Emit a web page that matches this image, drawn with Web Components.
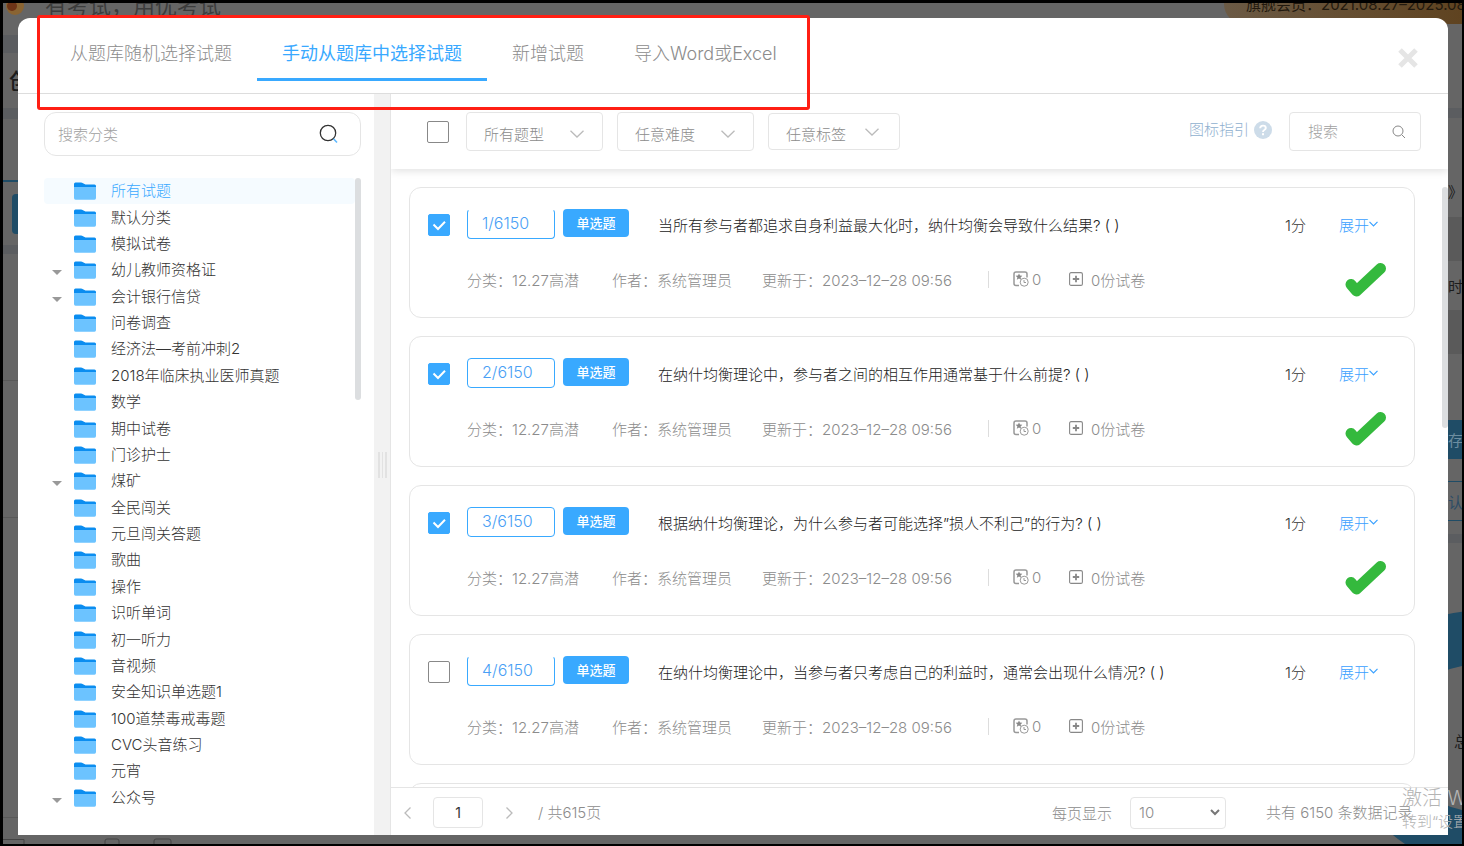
<!DOCTYPE html>
<html lang="zh-CN">
<head>
<meta charset="utf-8">
<title>选择试题</title>
<style>
html, body { height: 100%; margin: 0; }
body { background: #000; font-family: Inter, "Noto Sans CJK SC", sans-serif; font-size: 15px; font-weight: 300; color: #333; overflow: hidden; }
</style>
</head>
<body>
<exam-page></exam-page>
<script>
const define = (name, html, setup) => {
  const tpl = document.createElement('template');
  tpl.innerHTML = `<style>*{box-sizing:border-box}button,input,select{font:inherit;color:inherit;margin:0}:host([hidden]){display:none}</style>` + html;
  customElements.define(name, class extends HTMLElement {
    constructor() {
      super();
      this.attachShadow({ mode: 'open' }).append(tpl.content.cloneNode(true));
    }
    connectedCallback() { if (setup) setup(this, this.shadowRoot); }
  });
};

define('page-backdrop', `
<style>
:host { display: flex; flex-direction: column; position: relative; overflow: hidden; background: #656565; color: #1c1c1c; min-width: 0; min-height: 0; }
.top { display: flex; height: 15px; flex: none; align-items: flex-start; font-size: 22px; line-height: 6px; color: #3c3c3c; white-space: nowrap; font-weight: 400; }
.top svg { margin-left: 2px; margin-right: 20px; flex: none; }
.vip { margin-left: auto; width: 238px; padding-left: 22px; height: 21px; border-radius: 0 0 0 20px; background: linear-gradient(90deg, #6b5a45, #5f4320); font-size: 15px; line-height: 4px; color: #22190e; }
.sides { flex: 1; display: flex; justify-content: space-between; min-height: 0; overflow: hidden; }
.strip { width: 15px; display: flex; flex-direction: column; font-size: 15px; font-weight: 400; }
.strip > div { flex: none; display: flex; align-items: center; overflow: hidden; white-space: nowrap; }
.right { width: 14px; }
.d { background: #5b5d60; }
.b { background: #1f4c66; color: #6d8da0; }
.bottom { height: 9px; flex: none; }
.donut { position: absolute; right: 0; bottom: 0; }
.foot { position: absolute; left: 0; bottom: 0; }
</style>
<div class="top">
  <svg width="20" height="15" viewBox="0 0 20 15"><circle cx="10" cy="3" r="9" fill="#8a6432"/><circle cx="7" cy="3" r="5" fill="#6e3417"/></svg>
  <span>有考试，用优考试</span>
  <div class="vip">旗舰会员：2021.08.27–2025.08</div>
</div>
<div class="sides">
  <div class="strip">
    <div style="height:17px"></div><div class="d" style="height:18px"></div>
    <div style="height:55px;font-size:22px;font-weight:500;padding:0 0 4px 6px">创</div>
    <div class="d" style="height:11px"></div><div style="height:61px"></div>
    <div style="height:2px;background:#1f4c66"></div><div style="height:12px"></div>
    <div class="b" style="height:40px;margin-left:9px;border-radius:4px 0 0 4px"></div>
    <div style="height:11px"></div><div class="d" style="height:9px"></div>
    <div style="height:127px;border-bottom:1px solid #585858"></div>
    <div style="height:137px;border-bottom:1px solid #585858"></div>
    <div style="height:300px;border-bottom:1px solid #585858"></div>
  </div>
  <div class="strip right">
    <div style="height:90px"></div><div class="d" style="height:10px"></div>
    <div style="height:99px;padding-top:47px">》</div>
    <div style="height:44px;background:#5a5a5a"></div>
    <div style="height:49px">时</div>
    <div style="height:44px;background:#5a5a5a"></div>
    <div style="height:66px"></div>
    <div class="b" style="height:39px">存</div>
    <div style="height:22px"></div>
    <div style="height:40px;border-top:1px solid #1f4c66;border-bottom:1px solid #1f4c66;color:#2c4c66">认</div>
    <div style="height:13px"></div><div class="d" style="height:9px"></div>
    <div style="height:180px"></div>
    <div style="height:34px;padding-left:6px">总</div>
  </div>
</div>
<div class="bottom"></div>
<svg class="donut" width="70" height="240" viewBox="1392 604 70 240"><circle cx="1475" cy="738" r="100" fill="none" stroke="#1f4c66" stroke-width="54"/></svg>
<svg class="foot" width="180" height="6" viewBox="0 0 180 6" fill="none" stroke="#444"><path d="M0 1.500H21V6M102 6V3Q102 1 104 1H114Q116 1 116 3V6M151 6V3Q151 1 153 1H166Q168 1 168 3V6"/></svg>
`);

define('tab-item', `
<style>
:host { display: block; }
button { display: block; height: 63px; padding: 12px 25px 0; border: 0; border-bottom: 3px solid transparent; background: none; font-size: 18px; line-height: 24px; color: #8c8c8c; white-space: nowrap; }
:host([active]) button { color: #39a9ff; font-weight: 400; border-bottom-color: #39a9ff; }
</style>
<button type="button" role="tab"><slot></slot></button>`);

define('tree-item', `
<style>
:host { display: flex; align-items: center; padding-left: 8px; border-radius: 4px; min-height: 0; }
:host([active]) { background: #f5fbff; color: #39a9ff; }
.caret { width: 10px; height: 5px; margin-top: 5px; visibility: hidden; }
:host([parent]) .caret { visibility: visible; }
.folder { margin: 0 15px 0 12px; flex: none; }
a { color: inherit; text-decoration: none; line-height: 22px; white-space: nowrap; }
</style>
<svg class="caret" viewBox="0 0 10 5"><path d="M0 0H10L5 5Z" fill="#999"/></svg>
<svg class="folder" width="22" height="18" viewBox="0 0 22 18"><path d="M0 2Q0 .5 1.500 .5H7Q8 .5 9 1.200L11.500 2.500H20.500Q22 2.500 22 4V8H0Z" fill="#0b8df0"/><path d="M0 5H22V16Q22 17.800 20.500 17.800H1.500Q0 17.800 0 16Z" fill="#6cc3ff"/></svg>
<a href="#"><slot></slot></a>`);

define('category-tree', `
<style>
:host { display: flex; flex-direction: column; width: 356px; flex: none; padding: 18px 13px 24px 26px; min-height: 0; }
.search { display: flex; align-items: center; height: 44px; flex: none; border: 1px solid #e5e5e5; border-radius: 12px; padding: 0 21px 0 13px; margin-bottom: 22px; }
input { flex: 1; min-width: 0; border: 0; outline: 0; padding: 0; background: none; }
input::placeholder { color: #a0a0a0; }
.list { position: relative; flex: 1; min-height: 0; display: grid; grid-auto-rows: minmax(0, 1fr); padding-right: 6px; }
.thumb { position: absolute; right: 0; top: 0; width: 6px; height: 35%; border-radius: 3px; background: #dcdee0; }
</style>
<label class="search"><input type="text" placeholder="搜索分类" aria-label="搜索分类">
<svg width="20" height="20" viewBox="0 0 20 20" fill="none"><circle cx="9" cy="9" r="7.700" stroke="#333" stroke-width="1.300"/><path d="M14.500 14.800L18 18.500" stroke="#5cb8ff" stroke-width="1.600"/></svg></label>
<div class="list"><slot></slot><div class="thumb"></div></div>`);

define('filter-select', `
<style>
:host { display: grid; width: 137px; height: 39px; color: #8c8c8c; }
:host([narrow]) { width: 132px; height: 37px; }
select, svg { grid-area: 1 / 1; }
select { appearance: none; width: 100%; height: 100%; border: 1px solid #e5e5e5; border-radius: 4px; background: #fff; padding: 5px 17px 0; outline: 0; }
svg { justify-self: end; align-self: center; margin: 4px 19px 0 0; pointer-events: none; }
:host([narrow]) svg { margin: 0 21px 0 0; }
</style>
<select><option></option></select>
<svg width="14" height="8" viewBox="0 0 14 8" fill="none" stroke="#bbb" stroke-width="1.300"><path d="M.5 .8L7 7L13.500 .8"/></svg>`,
(el, root) => { root.querySelector('option').textContent = el.getAttribute('label'); root.querySelector('select').setAttribute('aria-label', el.getAttribute('label')); });

define('check-box', `
<style>
:host { display: grid; width: 22px; height: 22px; flex: none; }
input, svg { grid-area: 1 / 1; width: 22px; height: 22px; }
input { appearance: none; border: 1px solid #888; border-radius: 2px; background: #fff; }
svg { display: none; pointer-events: none; }
:host([checked]) input { background: #39a9ff; border-color: #39a9ff; }
:host([checked]) svg { display: block; }
</style>
<input type="checkbox" aria-label="选择"><svg viewBox="0 0 22 22" fill="none" stroke="#fff" stroke-width="2"><path d="M5.500 10.500L10 15L17 7.800"/></svg>`,
(el, root) => { root.querySelector('input').checked = el.hasAttribute('checked'); });

define('filter-bar', `
<style>
:host { display: flex; height: 75px; flex: none; padding: 18px 27px 0 36px; box-shadow: 0 2px 8px rgba(0,0,0,.12); clip-path: inset(0 0 -10px 0); position: relative; background: #fff; }
check-box { margin: 9px 17px 0 0; }
filter-select { margin-right: 14px; }
filter-select[narrow] { margin-top: 1px; }
.guide { margin-left: auto; display: flex; align-items: center; height: 36px; gap: 5px; color: #8fb0cf; text-decoration: none; }
.guide span { padding-bottom: 3px; }
.search { display: flex; align-items: center; width: 132px; height: 39px; border: 1px solid #e5e5e5; border-radius: 4px; padding: 0 14px 0 18px; margin-left: 17px; }
input { flex: 1; min-width: 0; border: 0; outline: 0; padding: 0; background: none; }
input::placeholder { color: #a0a0a0; }
</style>
<check-box></check-box>
<filter-select label="所有题型"></filter-select><filter-select label="任意难度"></filter-select><filter-select narrow label="任意标签"></filter-select>
<a class="guide" href="#"><span>图标指引</span><svg width="18" height="18" viewBox="0 0 18 18"><circle cx="9" cy="9" r="9" fill="#cddce9"/><path d="M6.200 7.200Q6.200 4.600 9 4.600T11.800 7Q11.800 8.200 10.300 9Q9 9.700 9 11" fill="none" stroke="#fff" stroke-width="1.900"/><rect x="8" y="12.200" width="2" height="2" fill="#fff"/></svg></a>
<label class="search"><input type="text" placeholder="搜索" aria-label="搜索"><svg width="14" height="14" viewBox="0 0 14 14" fill="none" stroke="#888"><circle cx="6" cy="6" r="5"/><path d="M9.800 9.800L13 13"/></svg></label>`);

define('question-card', `
<style>
:host { display: block; height: 131px; flex: none; border: 1px solid #e5e5e5; border-radius: 12px; padding: 21px 27px 0 18px; }
.row { display: flex; align-items: center; height: 30px; }
:host([pending]) .row { display: none; }
check-box { margin: 2px 17px 0 0; }
.no { width: 88px; height: 30px; border: 1px solid #39a9ff; border-radius: 4px; color: #4a9ff5; font-size: 16px; line-height: 27px; padding-left: 14px; margin-right: 8px; }
:host([open-top]) .no { border-top-color: transparent; }
.tag { width: 66px; height: 28px; border-radius: 4px; background: #39a9ff; color: #fff; font-size: 13px; font-weight: 500; line-height: 28px; text-align: center; margin-right: 29px; align-self: flex-start; }
.title { flex: 1; margin: 0; font-size: 15px; font-weight: 300; white-space: nowrap; color: #222; }
.score { width: 54px; }
.more { width: 48px; display: flex; align-items: center; color: #39a0ff; text-decoration: none; }
.meta { margin: 22px 0 0 39px; height: 36px; color: #8c8c8c; white-space: nowrap; }
.meta > span { flex: none; display: flex; align-items: center; }
.cat { width: 145px; } .author { width: 150px; } .time { width: 226px; }
.sep { width: 1px; height: 17px; background: #ddd; margin-right: 24px; }
.fav { width: 56px; gap: 3px; } .papers { gap: 8px; }
.ok { margin: 2px 0 0 auto; visibility: hidden; }
:host([checked]) .ok { visibility: visible; }
</style>
<div class="row"><check-box></check-box><span class="no"></span><span class="tag">单选题</span><p class="title"><slot></slot></p><span class="score">1分</span>
<a class="more" href="#">展开<svg width="9" height="6" viewBox="0 0 9 6" fill="none" stroke="#39a0ff" stroke-width="1.200"><path d="M.5 .8L4.500 4.800L8.500 .8"/></svg></a></div>
<div class="row meta"><span class="cat">分类：12.27高潜</span><span class="author">作者：系统管理员</span><span class="time">更新于：2023–12–28 09:56</span><span class="sep"></span>
<span class="fav"><svg width="16" height="16" viewBox="0 0 16 16" fill="none" stroke="#999"><path d="M6 14.500H3Q1 14.500 1 12.500V3Q1 1 3 1H12Q14 1 14 3V6.500" stroke-width="1.500"/><path d="M6 2.500L7 4.500L9.300 4.800L7.600 6.400L8.200 8.700L6 7.500L3.800 8.700L4.400 6.400L2.700 4.800L5 4.500Z" fill="#888" stroke="none"/><circle cx="11.200" cy="11.200" r="4"/><path d="M11 9V11.500H13"/></svg>0</span>
<span class="papers"><svg width="14" height="14" viewBox="0 0 14 14" fill="none" stroke="#888"><rect x=".6" y=".6" width="12.800" height="12.800" rx="1.500" stroke-width="1.100"/><path d="M7 3.800V10.200M3.800 7H10.200" stroke-width="1.800"/></svg>0份试卷</span>
<svg class="ok" width="43" height="36" viewBox="0 0 43 36" fill="none" stroke="#34b93d" stroke-width="11" stroke-linecap="round" stroke-linejoin="round"><path d="M7 22.500L12.500 29L36.500 6.500"/></svg></div>`,
(el, root) => {
  if (el.hasAttribute('pending')) { root.querySelectorAll('.row').forEach(r => r.remove()); return; }
  root.querySelector('.no').textContent = el.getAttribute('no') + '/6150';
  root.querySelector('check-box').toggleAttribute('checked', el.hasAttribute('checked'));
});

define('question-list', `
<style>
:host { position: relative; flex: 1; min-height: 0; overflow: hidden; display: flex; flex-direction: column; gap: 18px; padding: 18px 33px 0 18px; }
.thumb { position: absolute; right: 0; top: 18px; width: 6px; height: 39%; border-radius: 3px; background: #dcdee0; }
</style><slot></slot><div class="thumb"></div>`);

define('pager-bar', `
<style>
:host { display: flex; align-items: center; height: 48px; flex: none; border-top: 1px solid #e5e5e5; padding: 2px 27px 0 12px; color: #8c8c8c; }
button { border: 0; background: none; padding: 0; width: 9px; height: 14px; display: flex; }
input { width: 50px; height: 31px; border: 1px solid #e5e5e5; border-radius: 4px; text-align: center; margin: 0 22px 0 21px; font-size: 14px; font-weight: 400; color: #333; outline: 0; padding: 0; }
.total, .count { padding-bottom: 3px; white-space: nowrap; }
.total { margin-left: 24px; }
label { margin-left: auto; display: flex; align-items: center; gap: 18px; }
.size { display: grid; }
select, .size svg { grid-area: 1 / 1; }
select { appearance: none; width: 96px; height: 32px; border: 1px solid #e5e5e5; border-radius: 4px; background: #fff; padding: 0 8px; color: #8c8c8c; }
.size svg { justify-self: end; align-self: center; margin-right: 6px; pointer-events: none; }
.count { margin-left: 40px; width: 155px; }
</style>
<button type="button" aria-label="上一页"><svg width="9" height="14" viewBox="0 0 9 14" fill="none" stroke="#bbb" stroke-width="1.300"><path d="M7.500 1.500L2 7L7.500 12.500"/></svg></button>
<input type="text" value="1" aria-label="页码">
<button type="button" aria-label="下一页"><svg width="9" height="14" viewBox="0 0 9 14" fill="none" stroke="#bbb" stroke-width="1.300"><path d="M1.500 1.500L7 7L1.500 12.500"/></svg></button>
<span class="total">/ 共615页</span>
<label>每页显示<span class="size"><select><option>10</option></select><svg width="10" height="7" viewBox="0 0 10 7" fill="none" stroke="#777" stroke-width="2"><path d="M1 1L5 5L9 1"/></svg></span></label>
<span class="count">共有 6150 条数据记录</span>`);

define('exam-dialog', `
<style>
:host { display: flex; flex-direction: column; background: #fff; border-radius: 12px 12px 0 0; overflow: hidden; min-height: 0; min-width: 0; }
header { display: flex; height: 76px; flex: none; border-bottom: 1px solid #ddd; padding: 0 29px 12px 27px; }
nav { display: flex; }
.close { margin: 29px 0 0 auto; width: 22px; height: 22px; border: 0; background: none; padding: 1px; }
main { flex: 1; display: flex; min-height: 0; }
.splitter { width: 17px; flex: none; background: #f2f2f2; border-right: 1px solid #e5e5e5; display: flex; align-items: center; justify-content: center; }
.splitter i { width: 9px; height: 26px; border: solid #e2e2e2; border-width: 0 2px; background: linear-gradient(90deg, transparent 2px, #e2e2e2 2px, #e2e2e2 3px, transparent 3px); }
.pane { flex: 1; min-width: 0; display: flex; flex-direction: column; }
</style>
<header><nav role="tablist"><tab-item>从题库随机选择试题</tab-item><tab-item active>手动从题库中选择试题</tab-item><tab-item>新增试题</tab-item><tab-item>导入Word或Excel</tab-item></nav>
<button class="close" type="button" aria-label="关闭"><svg width="20" height="20" viewBox="0 0 20 20" stroke="#e5e5e5" stroke-width="5"><path d="M2 2L18 18M18 2L2 18"/></svg></button></header>
<main><category-tree></category-tree><div class="splitter"><i></i></div>
<section class="pane"><filter-bar></filter-bar>
<question-list>
<question-card no="1" checked open-top>当所有参与者都追求自身利益最大化时，纳什均衡会导致什么结果? ( )</question-card>
<question-card no="2" checked>在纳什均衡理论中，参与者之间的相互作用通常基于什么前提? ( )</question-card>
<question-card no="3" checked>根据纳什均衡理论，为什么参与者可能选择”损人不利己”的行为? ( )</question-card>
<question-card no="4" open-top>在纳什均衡理论中，当参与者只考虑自己的利益时，通常会出现什么情况? ( )</question-card>
<question-card pending></question-card>
</question-list><pager-bar></pager-bar></section></main>`,
(el, root) => {
  const names = ['所有试题','默认分类','模拟试卷','幼儿教师资格证','会计银行信贷','问卷调查','经济法—考前冲刺2','2018年临床执业医师真题','数学','期中试卷','门诊护士','煤矿','全民闯关','元旦闯关答题','歌曲','操作','识听单词','初一听力','音视频','安全知识单选题1','100道禁毒戒毒题','CVC头音练习','元宵','公众号'];
  const parents = ['幼儿教师资格证','会计银行信贷','煤矿','公众号'];
  root.querySelector('category-tree').append(...names.map((n, i) => {
    const item = document.createElement('tree-item');
    item.textContent = n;
    item.toggleAttribute('active', i === 0);
    item.toggleAttribute('parent', parents.includes(n));
    return item;
  }));
});

define('exam-page', `
<style>
:host { display: grid; grid-template: minmax(0, 1fr) / minmax(0, 1fr); height: 100vh; padding: 3px 2px 2px 3px; box-sizing: border-box; position: relative; overflow: hidden; }
page-backdrop, exam-dialog { grid-area: 1 / 1; }
exam-dialog { margin: 15px 14px 9px 15px; position: relative; }
.mark { position: absolute; left: 37px; top: 15px; width: 773px; height: 95px; border: 3px solid #ff1f14; border-radius: 3px; pointer-events: none; }
.watermark { position: absolute; left: 1402px; right: 2px; bottom: 14px; overflow: hidden; white-space: nowrap; color: #b4b4b4; font-size: 15px; line-height: 20px; pointer-events: none; }
.watermark b { display: block; font-size: 20px; line-height: 28px; font-weight: 300; }
</style>
<page-backdrop></page-backdrop><exam-dialog></exam-dialog>
<div class="mark"></div>
<div class="watermark"><b>激活 W</b>转到“设置</div>`);
</script>
</body>
</html>
